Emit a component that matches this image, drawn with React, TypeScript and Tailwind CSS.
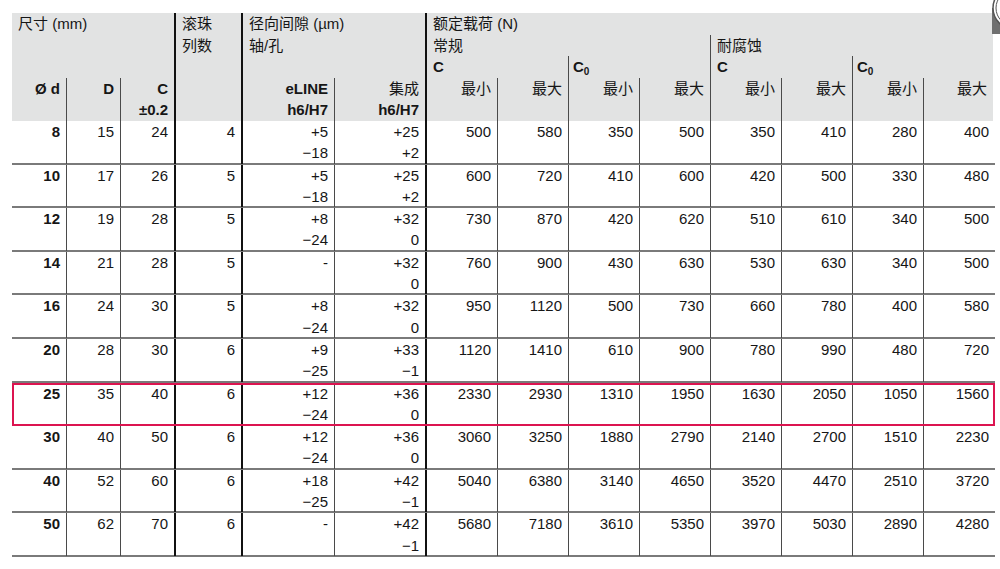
import React from 'react';

type Row = {
  d: string;
  D: string;
  C: string;
  balls: string;
  eline: [string, string];
  integ: [string, string];
  loads: string[];
};

const rows: Row[] = [
  { d: '8', D: '15', C: '24', balls: '4', eline: ['+5', '−18'], integ: ['+25', '+2'], loads: ['500', '580', '350', '500', '350', '410', '280', '400'] },
  { d: '10', D: '17', C: '26', balls: '5', eline: ['+5', '−18'], integ: ['+25', '+2'], loads: ['600', '720', '410', '600', '420', '500', '330', '480'] },
  { d: '12', D: '19', C: '28', balls: '5', eline: ['+8', '−24'], integ: ['+32', '0'], loads: ['730', '870', '420', '620', '510', '610', '340', '500'] },
  { d: '14', D: '21', C: '28', balls: '5', eline: ['-', ''], integ: ['+32', '0'], loads: ['760', '900', '430', '630', '530', '630', '340', '500'] },
  { d: '16', D: '24', C: '30', balls: '5', eline: ['+8', '−24'], integ: ['+32', '0'], loads: ['950', '1120', '500', '730', '660', '780', '400', '580'] },
  { d: '20', D: '28', C: '30', balls: '6', eline: ['+9', '−25'], integ: ['+33', '−1'], loads: ['1120', '1410', '610', '900', '780', '990', '480', '720'] },
  { d: '25', D: '35', C: '40', balls: '6', eline: ['+12', '−24'], integ: ['+36', '0'], loads: ['2330', '2930', '1310', '1950', '1630', '2050', '1050', '1560'] },
  { d: '30', D: '40', C: '50', balls: '6', eline: ['+12', '−24'], integ: ['+36', '0'], loads: ['3060', '3250', '1880', '2790', '2140', '2700', '1510', '2230'] },
  { d: '40', D: '52', C: '60', balls: '6', eline: ['+18', '−25'], integ: ['+42', '−1'], loads: ['5040', '6380', '3140', '4650', '3520', '4470', '2510', '3720'] },
  { d: '50', D: '62', C: '70', balls: '6', eline: ['-', ''], integ: ['+42', '−1'], loads: ['5680', '7180', '3610', '5350', '3970', '5030', '2890', '4280'] },
];

const gridCols = 'grid w-[983px] grid-cols-[55px_54px_55px_67px_92px_92px_repeat(8,71px)]';

const thin = 'border-r border-[#4a4a4a]';
const thick = 'border-r-2 border-[#111]';

// right border of each column in the body
const colBorder = [thin, thin, thick, thick, thin, thick, thin, thin, thin, thin, thin, thin, thin, ''];

const C0 = () => (
  <span className="font-bold">
    C<sub className="text-[10px] align-baseline relative top-[3px]">0</sub>
  </span>
);

const Header = () => (
  <div className={`${gridCols} grid-rows-[repeat(5,21.6px)]`}>
    <div className={`col-start-1 col-span-3 row-start-1 row-span-3 pl-[6px] bg-[#e2e3e3] ${thick}`}>尺寸 (mm)</div>
    <div className={`col-start-1 row-start-4 row-span-2 pr-[6px] text-right font-bold bg-[#e2e3e3] ${thin}`}>Ø d</div>
    <div className={`col-start-2 row-start-4 row-span-2 pr-[6px] text-right font-bold bg-[#e2e3e3] ${thin}`}>D</div>
    <div className={`col-start-3 row-start-4 row-span-2 pr-[6px] text-right font-bold bg-[#e2e3e3] ${thick}`}>
      <div>C</div>
      <div>±0.2</div>
    </div>
    <div className={`col-start-4 row-start-1 row-span-5 pl-[6px] bg-[#e2e3e3] ${thick}`}>
      <div>滚珠</div>
      <div>列数</div>
    </div>
    <div className={`col-start-5 col-span-2 row-start-1 row-span-3 pl-[6px] bg-[#e2e3e3] ${thick}`}>
      <div>径向间隙 (µm)</div>
      <div>轴/孔</div>
    </div>
    <div className={`col-start-5 row-start-4 row-span-2 pr-[6px] text-right font-bold bg-[#e2e3e3] ${thin}`}>
      <div>eLINE</div>
      <div>h6/H7</div>
    </div>
    <div className={`col-start-6 row-start-4 row-span-2 pr-[6px] text-right bg-[#e2e3e3] ${thick}`}>
      <div>集成</div>
      <div className="font-bold">h6/H7</div>
    </div>
    <div className="col-start-7 col-span-8 row-start-1 pl-[6px] mr-[2px] bg-[#e2e3e3]">额定载荷 (N)</div>
    <div className={`col-start-7 col-span-4 row-start-2 pl-[6px] bg-[#e2e3e3] ${thin}`}>常规</div>
    <div className="col-start-11 col-span-4 row-start-2 pl-[6px] mr-[2px] bg-[#e2e3e3]">耐腐蚀</div>
    <div className={`col-start-7 col-span-2 row-start-3 pl-[6px] font-bold bg-[#e2e3e3] ${thin}`}>C</div>
    <div className={`col-start-9 col-span-2 row-start-3 pl-[4px] bg-[#e2e3e3] ${thin}`}><C0 /></div>
    <div className={`col-start-11 col-span-2 row-start-3 pl-[6px] font-bold bg-[#e2e3e3] ${thin}`}>C</div>
    <div className="col-start-13 col-span-2 row-start-3 pl-[4px] mr-[2px] bg-[#e2e3e3]"><C0 /></div>
    {['最小', '最大', '最小', '最大', '最小', '最大', '最小', '最大'].map((t, i) => (
      <div
        key={i}
        className={`row-start-4 row-span-2 pr-[6px] text-right bg-[#e2e3e3] ${i < 7 ? thin : 'mr-[2px] pr-[4px]'}`}
        style={{ gridColumnStart: i + 7 }}
      >
        {t}
      </div>
    ))}
  </div>
);

const BodyRow = ({ row, highlight }: { row: Row; highlight: boolean }) => {
  const cells: [string, string][] = [
    [row.d, ''],
    [row.D, ''],
    [row.C, ''],
    [row.balls, ''],
    row.eline,
    row.integ,
    ...row.loads.map((l) => [l, ''] as [string, string]),
  ];
  return (
    <div className={`${gridCols} relative h-[43.6px] border-b-2 border-[#7a7a7a]`}>
      {cells.map((c, i) => (
        <div key={i} className={`pr-[6px] text-right ${colBorder[i]} ${i === 0 ? 'font-bold' : ''}`}>
          <div className="h-[21.3px]">{c[0]}</div>
          <div className="h-[21.3px]">{c[1]}</div>
        </div>
      ))}
      {highlight && (
        <div className="absolute left-0 right-0 top-0 bottom-[-2px] border-2 border-[#dc1450]" />
      )}
    </div>
  );
};

export default function App() {
  return (
    <div className="relative w-[1000px] h-[569px] overflow-hidden bg-white pl-[12px] pt-[13px] text-[15px] leading-[21.6px] text-[#161616] font-['Liberation_Sans','Noto_Sans_CJK_SC',sans-serif]">
      <Header />
      {rows.map((r, i) => (
        <BodyRow key={i} row={r} highlight={i === 6} />
      ))}
      <svg className="absolute right-0 top-0" width="8" height="34" viewBox="0 0 8 34">
        <rect x="0" y="8" width="8" height="26" fill="#6f6f6f" />
        <circle cx="22" cy="8" r="21" fill="#fff" stroke="#555" strokeWidth="1.5" />
        <circle cx="22" cy="8" r="18" fill="none" stroke="#555" strokeWidth="1" />
      </svg>
    </div>
  );
}
